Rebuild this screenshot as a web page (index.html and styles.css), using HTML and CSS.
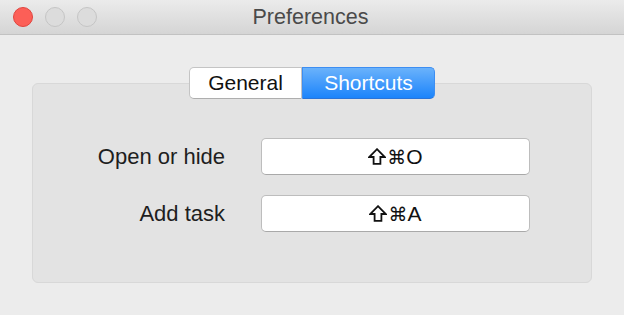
FILE: index.html
```html
<!DOCTYPE html>
<html lang="en">
<head>
  <meta charset="UTF-8" />
  <title>Preferences</title>
  <link rel="stylesheet" href="styles.css">
</head>
<body>

  <!-- Window title bar -->
  <div class="titlebar">
    <div class="lights">
      <span class="light close"></span>
      <span class="light"></span>
      <span class="light"></span>
    </div>
    <div class="title">Preferences</div>
    <div></div>
  </div>

  <!-- Window content -->
  <div class="content">
    <div class="tabs">
      <button class="tab">General</button>
      <button class="tab active">Shortcuts</button>
    </div>

    <div class="group">
      <div class="row">
        <label class="label">Open or hide</label>
        <div class="shortcut">
          <svg class="shift" viewBox="0 0 18 17"><path d="M9 1.2 L16.8 9 H12.4 V15.9 H5.6 V9 H1.2 Z"/></svg>
          <span class="cmd">⌘</span>O
        </div>
      </div>
      <div class="row">
        <label class="label">Add task</label>
        <div class="shortcut">
          <svg class="shift" viewBox="0 0 18 17"><path d="M9 1.2 L16.8 9 H12.4 V15.9 H5.6 V9 H1.2 Z"/></svg>
          <span class="cmd">⌘</span>A
        </div>
      </div>
    </div>
  </div>

</body>
</html>
```

FILE: styles.css
```css
/* Page and window */
body {
  margin: 0;
  width: 624px;
  height: 315px;
  overflow: hidden;
  background-color: #ececec;
  font-family: "Liberation Sans", Arial, sans-serif;
  color: #1e1e1e;
}

/* Title bar */
.titlebar {
  display: grid;
  grid-template-columns: 1fr auto 1fr;
  align-items: center;
  height: 34px;
  background: linear-gradient(#ebebeb, #d5d5d5);
  border-bottom: 1px solid #c2c2c2;
}

.lights {
  display: flex;
  gap: 12px;
  padding-left: 13px;
}

.light {
  width: 18px;
  height: 18px;
  border-radius: 50%;
  background-color: #dcdcdc;
  border: 1px solid #c5c5c5;
}

.light.close {
  background-color: #fc5f57;
  border-color: #e0443e;
}

.title {
  font-size: 21.5px;
  color: #4a4a4a;
  margin-left: -3px;
}

/* Content area */
.content {
  padding: 32px 32px 0;
}

.tabs {
  display: flex;
  justify-content: center;
  margin-bottom: -16px;
  position: relative;
}

.tab {
  height: 32px;
  padding: 0;
  font-family: inherit;
  font-size: 21px;
  color: #111;
  background-color: #fff;
  border: 1px solid #c4c4c4;
  border-bottom-color: #aeaeae;
  border-radius: 5px 0 0 5px;
  width: 113px;
}

.tab.active {
  width: 133px;
  color: #fff;
  background: linear-gradient(#6ab2fb, #1c84fb);
  border-color: #3d8ef2;
  border-bottom-color: #2a74d8;
  border-radius: 0 5px 5px 0;
}

/* Grouped box */
.group {
  height: 200px;
  box-sizing: border-box;
  padding-top: 54px;
  background-color: #e3e3e3;
  border: 1px solid #d8d8d8;
  border-radius: 6px;
  display: flex;
  flex-direction: column;
  gap: 20px;
}

.row {
  display: grid;
  grid-template-columns: 192px 269px;
  column-gap: 36px;
  align-items: center;
}

.label {
  text-align: right;
  font-size: 22px;
}

.shortcut {
  height: 37px;
  box-sizing: border-box;
  display: flex;
  align-items: center;
  justify-content: center;
  background-color: #fff;
  border: 1px solid #bdbdbd;
  border-bottom-color: #a9a9a9;
  border-radius: 5px;
  font-size: 21px;
  color: #111;
}

.shift {
  width: 18px;
  height: 17px;
  margin-right: 1px;
}

.shift path {
  fill: none;
  stroke: #111;
  stroke-width: 1.8;
  stroke-linejoin: miter;
}

.cmd {
  font-family: "DejaVu Sans", sans-serif;
  font-size: 19px;
}
```
